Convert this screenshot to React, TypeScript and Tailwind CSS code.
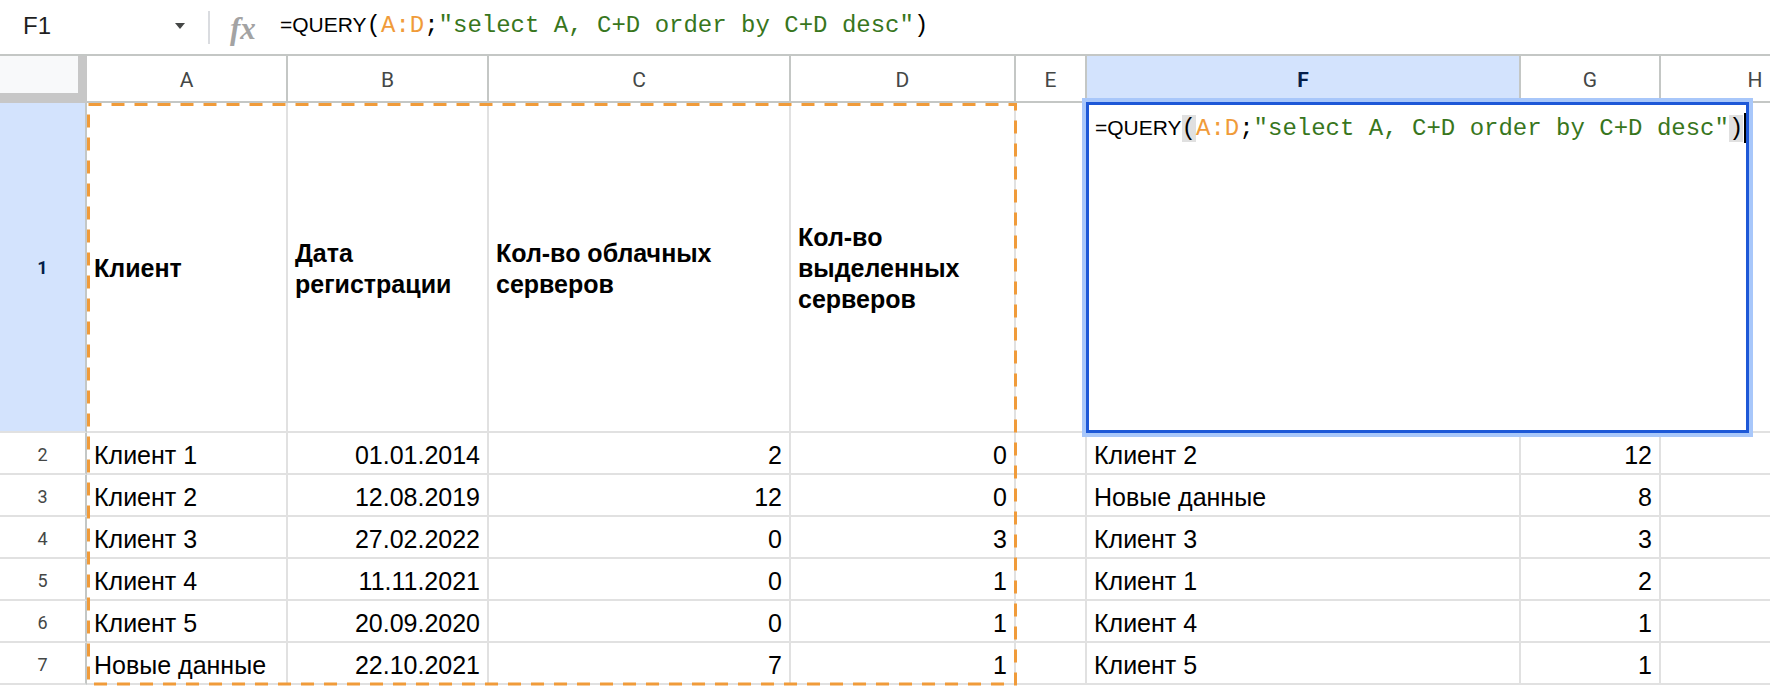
import React from "react";

const SANS = "font-['Liberation_Sans',Arial,sans-serif]";
const MONO = "font-['Liberation_Mono',monospace]";

const letters = ["A", "B", "C", "D", "E", "F", "G", "H"];

const data: string[][] = [
  ["Клиент 1", "01.01.2014", "2", "0", "", "Клиент 2", "12", ""],
  ["Клиент 2", "12.08.2019", "12", "0", "", "Новые данные", "8", ""],
  ["Клиент 3", "27.02.2022", "0", "3", "", "Клиент 3", "3", ""],
  ["Клиент 4", "11.11.2021", "0", "1", "", "Клиент 1", "2", ""],
  ["Клиент 5", "20.09.2020", "0", "1", "", "Клиент 4", "1", ""],
  ["Новые данные", "22.10.2021", "7", "1", "", "Клиент 5", "1", ""],
];

const rightAligned = [false, true, true, true, false, false, true, false];

const headers1 = [
  "Клиент",
  "Дата регистрации",
  "Кол-во облачных серверов",
  "Кол-во выделенных серверов",
  "",
  "",
  "",
  "",
];

function Formula({ editor }: { editor?: boolean }) {
  const paren = editor ? "bg-[#e0e0e0]" : "";
  return (
    <span className="whitespace-pre text-black">
      <span className={`${SANS} text-[21px]`}>=QUERY</span>
      <span className={`${MONO} text-[24px]`}>
        <span className={paren}>(</span>
        <span className="text-[#f09b3a]">A:D</span>
        <span>;</span>
        <span className="text-[#38761d]">"select A, C+D order by C+D desc"</span>
        <span className={paren}>)</span>
      </span>
    </span>
  );
}

export default function App() {
  return (
    <div className={`w-[1770px] h-[686px] overflow-hidden bg-white ${SANS}`}>
      {/* Formula bar */}
      <div className="h-[56px] border-b-2 border-[#c4c7c5] flex items-center pb-[2px]">
        <div className="w-[175px] pl-[23px] text-[24px] text-[#1f1f1f]">F1</div>
        <svg width="10" height="6" viewBox="0 0 10 6" className="shrink-0">
          <path d="M0 0 L10 0 L5 6 Z" fill="#444746" />
        </svg>
        <div className="ml-[23px] w-[2px] h-[33px] bg-[#dadce0] mt-[2px]" />
        <span className="ml-[20px] w-[29px] font-['Liberation_Serif',serif] italic font-bold text-[31px] leading-none text-[#a3a3a3] mt-[4px]">
          fx
        </span>
        <div className="ml-[21px]">
          <Formula />
        </div>
      </div>

      {/* Grid */}
      <div className="relative">
        <div className="grid grid-cols-[87px_201px_201px_302px_225px_71px_434px_140px_190px] grid-rows-[47px_330px_repeat(6,42px)] w-[1851px]">
          {/* header row */}
          <div className="bg-[#f8f9fa] border-r-[9px] border-b-[10px] border-[#c7c7c7]" />
          {letters.map((l) => {
            const sel = l === "F";
            return (
              <div
                key={l}
                className={`flex items-center justify-center pt-[4px] border-r-2 border-b-2 border-[#c4c7c5] font-['Roboto',sans-serif] text-[21px] ${
                  sel ? "bg-[#d3e3fd] font-bold text-[#041e49]" : "text-[#444746]"
                }`}
              >
                {l}
              </div>
            );
          })}

          {/* row 1 */}
          <div className="flex items-center justify-center bg-[#d3e3fd] border-r-2 border-r-[#c4c7c5] border-b-2 border-b-[#e1e1e1] font-['Roboto',sans-serif] text-[18px] font-bold text-[#041e49]">
            1
          </div>
          {headers1.map((h, i) => (
            <div
              key={i}
              className="flex items-center px-[7px] pt-[3px] border-r-2 border-b-2 border-[#e1e1e1] text-[25px] leading-[31px] font-bold text-black"
            >
              <div>{h}</div>
            </div>
          ))}

          {/* data rows */}
          {data.map((row, r) => (
            <React.Fragment key={r}>
              <div className="flex items-center justify-center pt-[2px] border-r-2 border-r-[#c4c7c5] border-b-2 border-b-[#e1e1e1] font-['Roboto',sans-serif] text-[18px] text-[#444746]">
                {r + 2}
              </div>
              {row.map((v, c) => (
                <div
                  key={c}
                  className={`flex items-center px-[7px] pt-[6px] border-r-2 border-b-2 border-[#e1e1e1] text-[25px] text-black whitespace-nowrap ${
                    rightAligned[c] ? "justify-end" : "justify-start"
                  }`}
                >
                  {v}
                </div>
              ))}
            </React.Fragment>
          ))}
        </div>

        {/* copy selection marching ants */}
        <svg
          className="absolute left-0 top-0 pointer-events-none"
          width="1100"
          height="632"
          viewBox="0 0 1100 632"
        >
          <rect
            x="88.5"
            y="48.5"
            width="927"
            height="579.5"
            fill="none"
            stroke="#f09b3a"
            strokeWidth="3"
            strokeDasharray="13 10"
          />
        </svg>

        {/* cell editor */}
        <div className="absolute left-[1082px] top-[42px] w-[671px] h-[339px] border-4 border-[#a8c7fa]">
          <div className="h-full w-full border-[3px] border-[#1d58d7] bg-white pl-[6px] pt-[8px] leading-[30px] flex items-start">
            <Formula editor />
            <span className="inline-block w-[2px] h-[30px] bg-black ml-[1px]" />
          </div>
        </div>
      </div>
    </div>
  );
}
